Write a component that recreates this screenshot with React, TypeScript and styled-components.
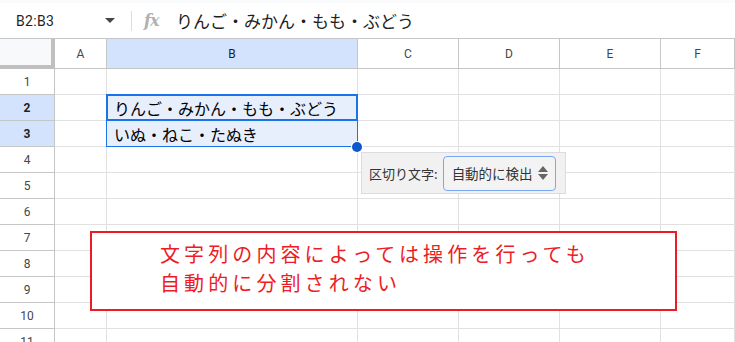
import React from "react";
import styled, { createGlobalStyle } from "styled-components";

const GlobalStyle = createGlobalStyle`
  html, body {
    margin: 0;
    padding: 0;
    background: #ffffff;
    overflow: hidden;
  }
  body {
    font-family: Roboto, "Liberation Sans", "Noto Sans CJK JP", sans-serif;
  }
`;

const JP = `"Noto Sans CJK JP", "Noto Sans", sans-serif`;

const Page = styled.div`
  width: 735px;
  height: 342px;
  overflow: hidden;
  display: flex;
  flex-direction: column;
`;

const FormulaBar = styled.div`
  flex: none;
  height: 35px;
  margin-top: 3px;
  display: flex;
  align-items: center;
  background: #ffffff;
  box-shadow: 0 -3px 0 #f9fbfd;
`;

const NameBox = styled.div`
  width: 89px;
  padding-left: 16px;
  font-size: 14px;
  color: #1f1f1f;
  letter-spacing: 0.3px;
`;

const Caret = styled.div`
  width: 0;
  height: 0;
  border-left: 5px solid transparent;
  border-right: 5px solid transparent;
  border-top: 5px solid #444746;
`;

const Divider = styled.div`
  width: 1px;
  height: 20px;
  background: #dadce0;
  margin: 0 12px 0 16px;
`;

const Fx = styled.span`
  font-family: "DejaVu Serif", "Liberation Serif", serif;
  font-style: italic;
  font-weight: bold;
  font-size: 16px;
  color: #b0b0b0;
  width: 32px;
  letter-spacing: -1px;
`;

const FormulaText = styled.span`
  font-family: ${JP};
  font-size: 17px;
  color: #1f1f1f;
`;

const Sheet = styled.div`
  flex: none;
  position: relative;
  display: grid;
  grid-template-columns: 55px 52px 251px 101px 101px 101px 1fr;
  grid-template-rows: 30px repeat(11, 26px);
  border-top: 1px solid #c4c7c5;
`;

const Corner = styled.div`
  background: #f8f9fa;
  border-right: 4px solid #c0c0c0;
  border-bottom: 4px solid #c0c0c0;
`;

const ColHead = styled.div<{ $active?: boolean }>`
  display: flex;
  align-items: center;
  justify-content: center;
  font-size: 12px;
  color: ${(p) => (p.$active ? "#1f1f1f" : "#444746")};
  background: ${(p) => (p.$active ? "#d3e3fd" : "#ffffff")};
  border-right: 1px solid #c4c7c5;
  border-bottom: 1px solid #c4c7c5;
`;

const RowHead = styled.div<{ $active?: boolean }>`
  display: flex;
  align-items: center;
  justify-content: center;
  font-size: 12px;
  color: ${(p) => (p.$active ? "#1f1f1f" : "#444746")};
  font-weight: ${(p) => (p.$active ? 700 : 400)};
  background: ${(p) => (p.$active ? "#d3e3fd" : "#ffffff")};
  border-right: 1px solid #c4c7c5;
  border-bottom: 1px solid #c4c7c5;
`;

const Cell = styled.div<{ $selected?: boolean }>`
  display: flex;
  align-items: center;
  padding-left: 7px;
  font-family: ${JP};
  font-size: 16px;
  color: #000000;
  white-space: nowrap;
  background: ${(p) => (p.$selected ? "#e7effd" : "#ffffff")};
  border-right: 1px solid #e1e1e1;
  border-bottom: 1px solid #e1e1e1;
`;

const Selection = styled.div`
  position: absolute;
  left: 106px;
  top: 55px;
  width: 252px;
  height: 53px;
  box-sizing: border-box;
  border: 1px solid #1a73e8;
  pointer-events: none;
`;

const ActiveCell = styled.div`
  position: absolute;
  left: 106px;
  top: 55px;
  width: 252px;
  height: 27px;
  box-sizing: border-box;
  border: 2px solid #1a73e8;
`;

const FillHandle = styled.div`
  position: absolute;
  left: 352px;
  top: 103px;
  width: 10px;
  height: 10px;
  border-radius: 50%;
  background: #0b57d0;
  box-shadow: 0 0 0 1px #ffffff;
`;

const SplitPopup = styled.div`
  position: absolute;
  left: 361px;
  top: 113px;
  width: 205px;
  height: 42px;
  box-sizing: border-box;
  display: flex;
  align-items: center;
  padding: 0 7px;
  gap: 5px;
  background: #f1f1f1;
  border: 1px solid #dadce0;
`;

const SplitLabel = styled.span`
  font-family: ${JP};
  font-size: 13px;
  color: #333333;
`;

const SplitSelect = styled.div`
  height: 35px;
  width: 113px;
  box-sizing: border-box;
  display: flex;
  align-items: center;
  justify-content: space-between;
  padding: 0 6px 0 8px;
  border: 1px solid #7aa7f2;
  border-radius: 4px;
  background: #f3f3f3;
  font-family: ${JP};
  font-size: 13.5px;
  color: #333333;
`;

const Note = styled.div`
  position: absolute;
  left: 90px;
  top: 192px;
  width: 587px;
  height: 80px;
  box-sizing: border-box;
  border: 2px solid #ed1c24;
  background: #ffffff;
  padding: 6px 0 0 68px;
  font-family: ${JP};
  font-size: 20px;
  line-height: 29px;
  letter-spacing: 4.1px;
  color: #ed1c24;
`;

const columns = ["A", "B", "C", "D", "E", "F"];
const cellText: Record<string, string> = {
  "2": "りんご・みかん・もも・ぶどう",
  "3": "いぬ・ねこ・たぬき",
};

const UpDown = () => (
  <svg width="12" height="16" viewBox="0 0 12 16">
    <path d="M6 1 L11 7 H1 Z" fill="#666666" />
    <path d="M6 15 L11 9 H1 Z" fill="#666666" />
  </svg>
);

export default function App() {
  const rows = Array.from({ length: 11 }, (_, i) => i + 1);
  return (
    <Page>
      <GlobalStyle />
      <FormulaBar>
        <NameBox>B2:B3</NameBox>
        <Caret />
        <Divider />
        <Fx>fx</Fx>
        <FormulaText>りんご・みかん・もも・ぶどう</FormulaText>
      </FormulaBar>
      <Sheet>
        <Corner />
        {columns.map((c) => (
          <ColHead key={c} $active={c === "B"}>
            {c}
          </ColHead>
        ))}
        {rows.map((r) => (
          <React.Fragment key={r}>
            <RowHead $active={r === 2 || r === 3}>{r}</RowHead>
            {columns.map((c) => {
              const sel = c === "B" && (r === 2 || r === 3);
              return (
                <Cell key={c} $selected={sel}>
                  {c === "B" ? cellText[String(r)] : null}
                </Cell>
              );
            })}
          </React.Fragment>
        ))}
        <Selection />
        <ActiveCell />
        <FillHandle />
        <SplitPopup>
          <SplitLabel>区切り文字:</SplitLabel>
          <SplitSelect>
            自動的に検出
            <UpDown />
          </SplitSelect>
        </SplitPopup>
        <Note>
          文字列の内容によっては操作を行っても
          <br />
          自動的に分割されない
        </Note>
      </Sheet>
    </Page>
  );
}
